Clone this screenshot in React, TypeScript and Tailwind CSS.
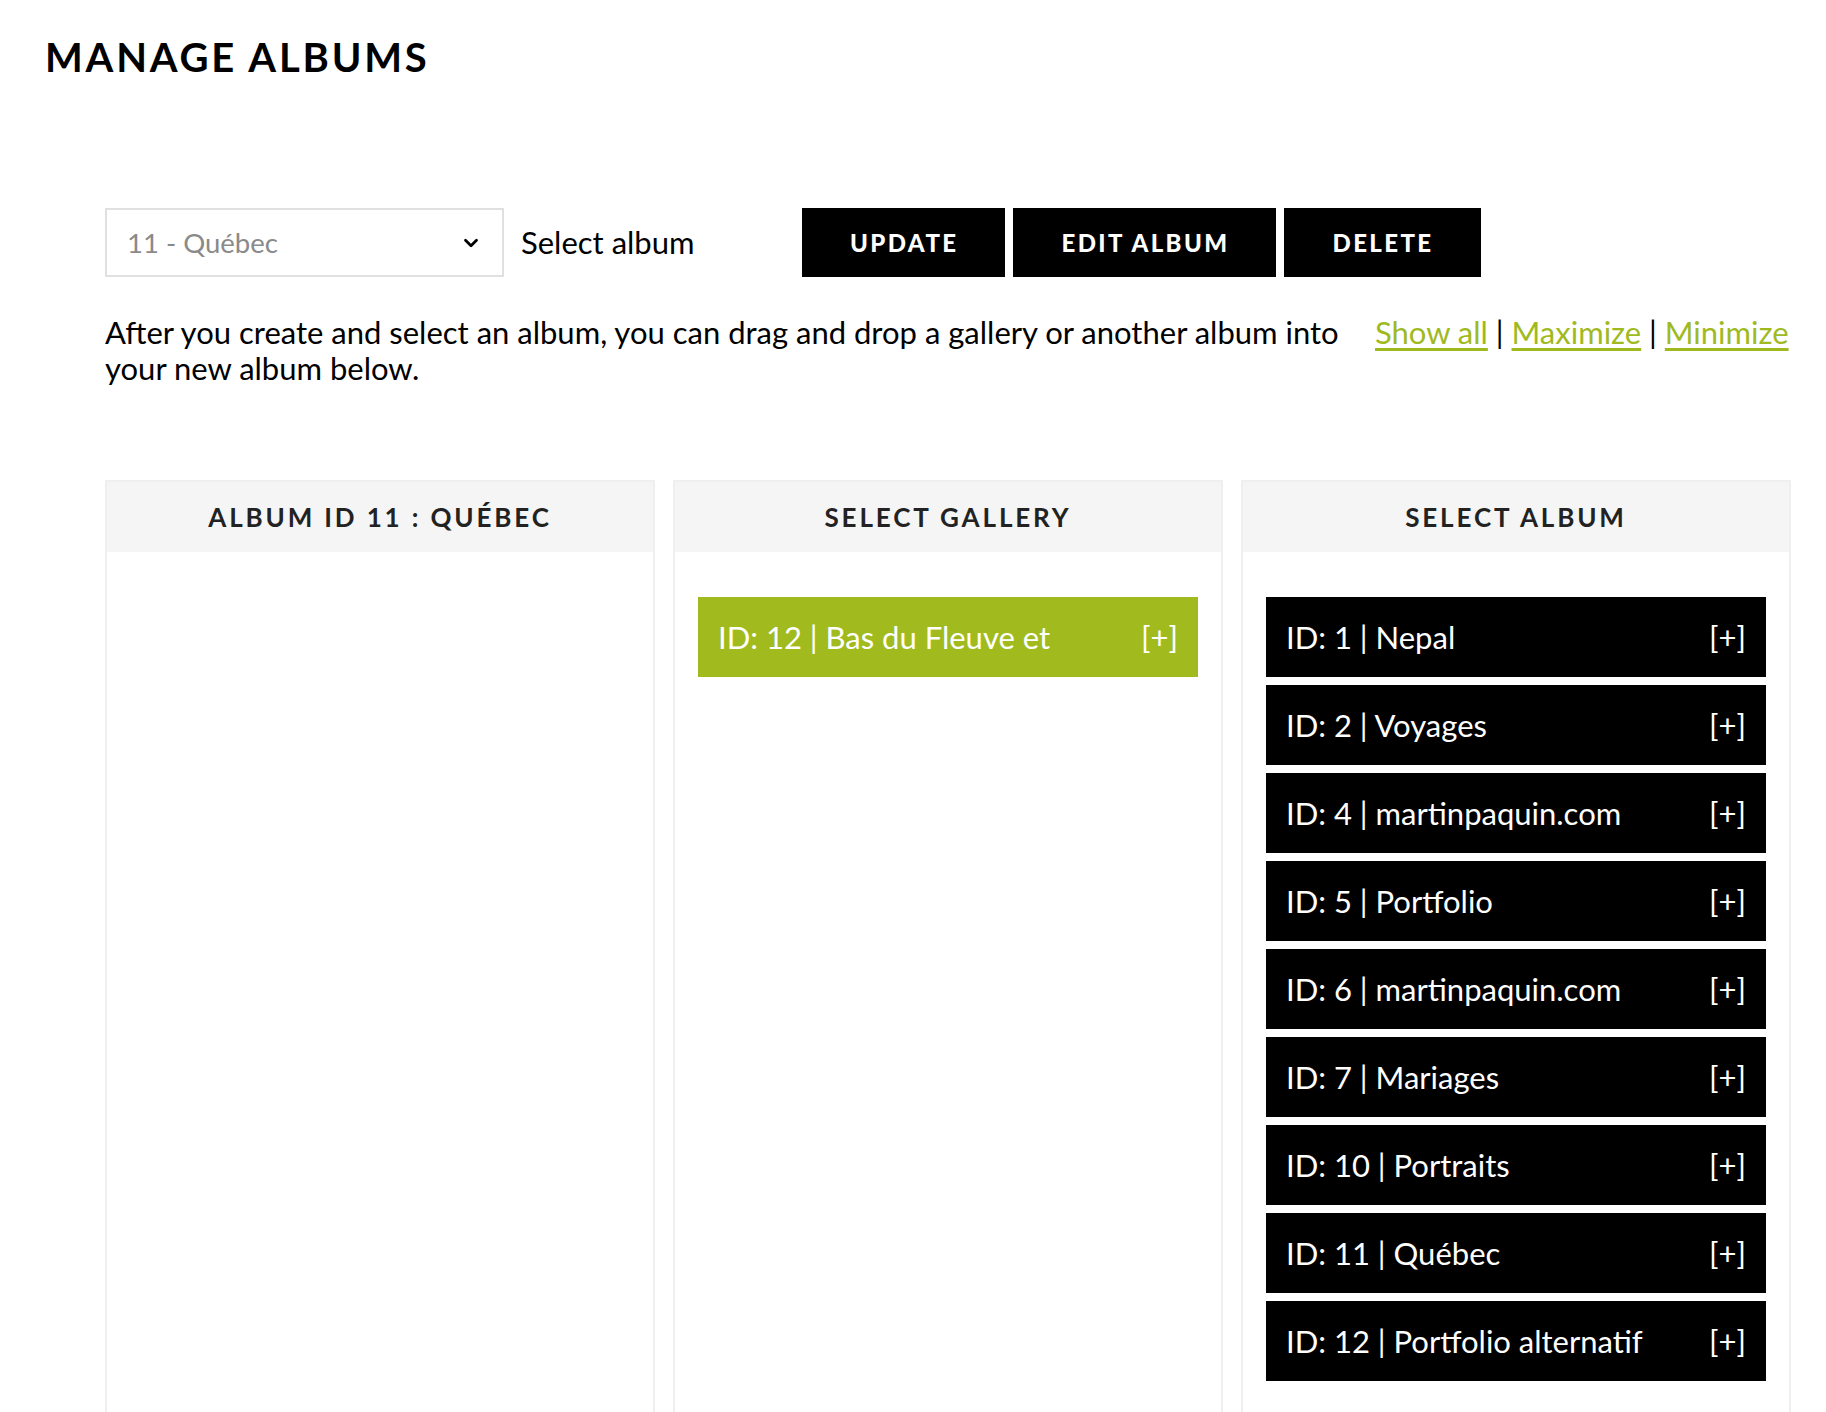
import React from "react";
import { ChevronDown } from "lucide-react";

const albums = [
  "ID: 1 | Nepal",
  "ID: 2 | Voyages",
  "ID: 4 | martinpaquin.com",
  "ID: 5 | Portfolio",
  "ID: 6 | martinpaquin.com",
  "ID: 7 | Mariages",
  "ID: 10 | Portraits",
  "ID: 11 | Québec",
  "ID: 12 | Portfolio alternatif",
];

function Item({ label, green }: { label: string; green?: boolean }) {
  return (
    <div
      className={
        "flex h-[80px] items-center justify-between px-[20px] text-[31px] text-white " +
        (green ? "bg-[#a1bb1e]" : "bg-black")
      }
    >
      <span>{label}</span>
      <span>[+]</span>
    </div>
  );
}

function Column({ title, children }: { title: string; children?: React.ReactNode }) {
  return (
    <div className="flex flex-col border-2 border-[#efefef] bg-white">
      <div className="flex h-[70px] items-center justify-center bg-[#f5f5f5] text-[26px] font-bold tracking-[0.11em] text-[#222]">
        {title}
      </div>
      <div className="flex flex-col gap-[8px] px-[23px] pt-[45px] pb-[60px]">{children}</div>
    </div>
  );
}

export default function App() {
  return (
    <div className="min-h-screen bg-white font-['Lato',sans-serif] text-black">
      <h1 className="pl-[45px] pt-[37px] text-[40px] font-bold leading-none tracking-[0.07em]">
        MANAGE ALBUMS
      </h1>
      <div className="ml-[105px] mr-[30px] mt-[131px]">
        <div className="flex items-center">
          <div className="flex h-[69px] w-[399px] items-center justify-between border-2 border-[#e0e0e0] pl-[20px] pr-[20px]">
            <span className="text-[27.5px] text-[#8a8a8a]">11 - Québec</span>
            <ChevronDown size={22} strokeWidth={3} className="text-black" />
          </div>
          <span className="ml-[17px] w-[281px] text-[31px]">Select album</span>
          <div className="flex gap-[8px]">
            {["UPDATE", "EDIT ALBUM", "DELETE"].map((b) => (
              <div
                key={b}
                className="flex h-[69px] items-center bg-black pl-[48px] pr-[47px] text-[24px] font-black tracking-[0.1em] text-white"
              >
                {b}
              </div>
            ))}
          </div>
        </div>
        <div className="mt-[37px] flex">
          <p className="mr-[20px] w-[1250px] shrink-0 text-[31px] leading-[36px]">
            After you create and select an album, you can drag and drop a gallery or another album into your new album
            below.
          </p>
          <div className="whitespace-nowrap text-[31px] leading-[36px]">
            <a className="text-[#9fba1f] underline underline-offset-4">Show all</a>
            <span> | </span>
            <a className="text-[#9fba1f] underline underline-offset-4">Maximize</a>
            <span> | </span>
            <a className="text-[#9fba1f] underline underline-offset-4">Minimize</a>
          </div>
        </div>
        <div className="mr-[5px] mt-[94px] grid grid-cols-3 gap-[18px]">
          <Column title="ALBUM ID 11 : QUÉBEC" />
          <Column title="SELECT GALLERY">
            <Item label="ID: 12 | Bas du Fleuve et" green />
          </Column>
          <Column title="SELECT ALBUM">
            {albums.map((a) => (
              <Item key={a} label={a} />
            ))}
          </Column>
        </div>
      </div>
    </div>
  );
}
